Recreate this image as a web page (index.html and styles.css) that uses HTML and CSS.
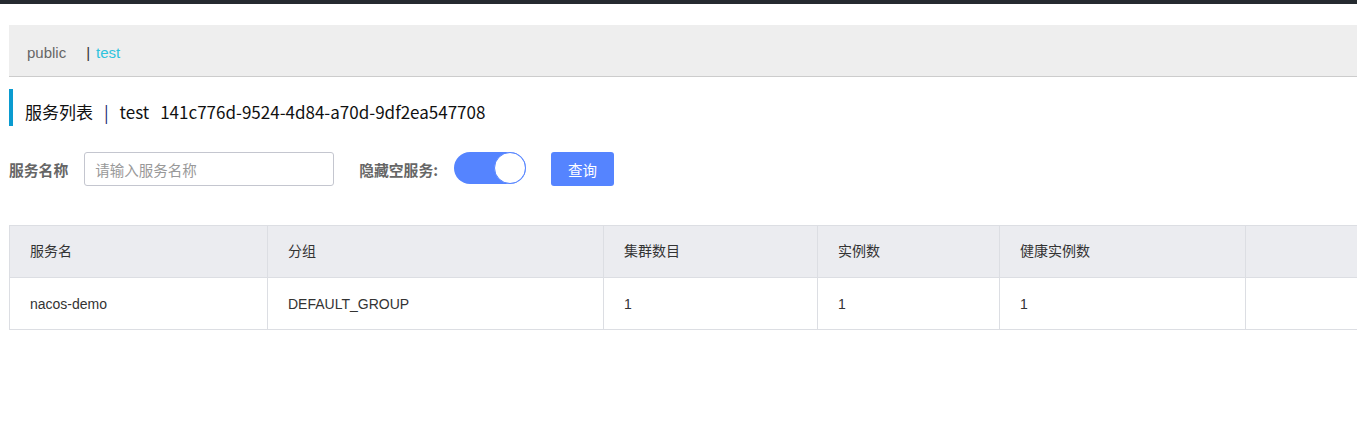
FILE: index.html
```html
<!DOCTYPE html>
<html lang="zh-CN">
<head>
<meta charset="utf-8">
<title>服务列表</title>
<link rel="stylesheet" href="styles.css">
</head>
<body>
<div class="topbar"></div>
<div class="page">
  <div class="ns-bar">
    <span class="ns-item">public</span>
    <span class="ns-sep">|</span>
    <span class="ns-item ns-active">test</span>
  </div>
  <div class="title">
    <span>服务列表</span><span class="title-sep">|</span><span>test</span><span class="title-id">141c776d-9524-4d84-a70d-9df2ea547708</span>
  </div>
  <div class="form">
    <label class="form-label">服务名称</label>
    <input class="input" type="text" placeholder="请输入服务名称">
    <label class="form-label label-hide">隐藏空服务:</label>
    <div class="switch"><div class="knob"></div></div>
    <button class="btn">查询</button>
  </div>
  <table class="table">
    <colgroup>
      <col class="c1"><col class="c2"><col class="c3"><col class="c4"><col class="c5"><col>
    </colgroup>
    <thead>
      <tr><th>服务名</th><th>分组</th><th>集群数目</th><th>实例数</th><th>健康实例数</th><th></th></tr>
    </thead>
    <tbody>
      <tr><td>nacos-demo</td><td>DEFAULT_GROUP</td><td>1</td><td>1</td><td>1</td><td></td></tr>
    </tbody>
  </table>
</div>
</body>
</html>
```

FILE: styles.css
```css
html, body {
  margin: 0;
  padding: 0;
  background: #fff;
  overflow: hidden;
}
body {
  font-family: "Liberation Sans", "Noto Sans CJK SC", sans-serif;
  color: #333;
  font-size: 14px;
}
.topbar {
  height: 4px;
  background: #252a30;
}
.page {
  padding-left: 9px;
  padding-top: 21px;
}
.ns-bar {
  width: calc(100% + 20px);
  height: 52px;
  background: #eee;
  border-bottom: 1px solid #ccc;
  display: flex;
  align-items: center;
  padding-left: 18px;
  padding-top: 3px;
  box-sizing: border-box;
  font-size: 15px;
}
.ns-item {
  color: #666;
}
.ns-sep {
  color: #333;
  margin-left: 20px;
  margin-right: 6px;
}
.ns-active {
  color: #2ec3dd;
}
.title {
  margin-top: 12px;
  height: 37px;
  border-left: 4px solid #0a9bd0;
  padding-left: 12px;
  padding-top: 8px;
  box-sizing: border-box;
  display: flex;
  align-items: center;
  font-size: 17px;
  color: #111;
  font-family: "Noto Sans CJK SC", sans-serif;
}
.title span { line-height: 1; }
.title-sep {
  margin: 0 11px;
  color: #14216b;
}
.title-id {
  margin-left: 11px;
}
.form {
  margin-top: 26px;
  height: 34px;
  display: flex;
  align-items: center;
}
.form-label {
  font-family: "Noto Sans CJK SC", sans-serif;
  font-weight: bold;
  font-size: 14.8px;
  color: #666;
}
.input {
  margin-left: 16px;
  width: 250px;
  height: 34px;
  box-sizing: border-box;
  border: 1px solid #c4c6cf;
  border-radius: 3px;
  padding: 0 10px;
  font-family: "Noto Sans CJK SC", sans-serif;
  font-size: 14.5px;
  outline: none;
}
.input::placeholder {
  color: #999;
}
.label-hide {
  margin-left: 25px;
}
.switch {
  margin-left: 16px;
  width: 72px;
  height: 32px;
  border-radius: 16px;
  background: #5584ff;
  position: relative;
  box-sizing: border-box;
  margin-top: -2px;
}
.knob {
  position: absolute;
  right: 0;
  top: 0;
  width: 32px;
  height: 32px;
  box-sizing: border-box;
  border-radius: 50%;
  background: #fff;
  border: 1px solid #5584ff;
}
.btn {
  margin-left: 25px;
  width: 63px;
  height: 34px;
  background: #5584ff;
  border: none;
  border-radius: 3px;
  color: #fff;
  font-family: "Noto Sans CJK SC", sans-serif;
  font-size: 14.5px;
  padding: 0;
}
.table {
  margin-top: 39px;
  width: 1400px;
  border-collapse: collapse;
  table-layout: fixed;
  font-size: 14px;
}
.c1 { width: 258px; }
.c2 { width: 336px; }
.c3 { width: 214px; }
.c4 { width: 182px; }
.c5 { width: 246px; }
.table th, .table td {
  height: 52px;
  box-sizing: border-box;
  border: 1px solid #dcdee3;
  text-align: left;
  padding: 0 0 0 20px;
  font-weight: normal;
  color: #333;
  font-family: "Liberation Sans", "Noto Sans CJK SC", sans-serif;
}
.table th {
  background: #ebecf0;
  padding-bottom: 3px;
}
```
